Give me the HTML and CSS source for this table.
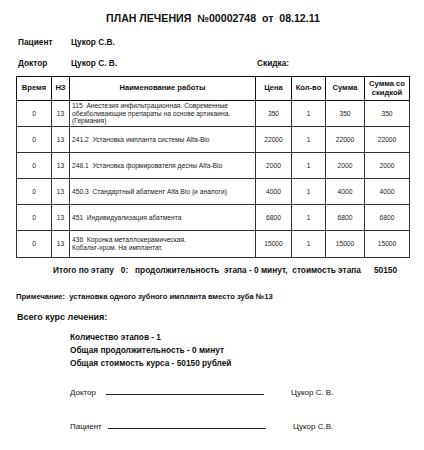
FILE: index.html
```html
<!DOCTYPE html>
<html lang="ru">
<head>
<meta charset="utf-8">
<link rel="stylesheet" href="styles.css">
</head>
<body>
<div class="page">
  <h1 class="title">ПЛАН ЛЕЧЕНИЯ&nbsp; №00002748&nbsp; от&nbsp; 08.12.11</h1>
  <div class="meta">
    <div class="meta-row"><span class="label">Пациент</span><span class="value">Цукор С.В.</span></div>
    <div class="meta-row"><span class="label">Доктор</span><span class="value">Цукор С. В.</span><span class="discount">Скидка:</span></div>
  </div>
  <table class="plan">
    <colgroup>
      <col class="c1"><col class="c2"><col class="c3"><col class="c4"><col class="c5"><col class="c6"><col class="c7">
    </colgroup>
    <thead>
      <tr><th>Время</th><th>НЗ</th><th>Наименование работы</th><th>Цена</th><th>Кол-во</th><th>Сумма</th><th>Сумма со скидкой</th></tr>
    </thead>
    <tbody>
      <tr><td>0</td><td>13</td><td class="name">115&nbsp; Анестезия инфильтрационная. Современные обезболивающие препараты на основе артикаина. (Германия)</td><td>350</td><td>1</td><td>350</td><td>350</td></tr>
      <tr><td>0</td><td>13</td><td class="name">241.2&nbsp; Установка импланта системы Alfa-Bio</td><td>22000</td><td>1</td><td>22000</td><td>22000</td></tr>
      <tr><td>0</td><td>13</td><td class="name">248.1&nbsp; Установка формирователя десны Alfa-Bio</td><td>2000</td><td>1</td><td>2000</td><td>2000</td></tr>
      <tr><td>0</td><td>13</td><td class="name">450.3&nbsp; Стандартный абатмент Alfa Bio (и аналоги)</td><td>4000</td><td>1</td><td>4000</td><td>4000</td></tr>
      <tr><td>0</td><td>13</td><td class="name">451&nbsp; Индивидуализация абатмента</td><td>6800</td><td>1</td><td>6800</td><td>6800</td></tr>
      <tr class="last"><td>0</td><td>13</td><td class="name">436&nbsp; Коронка металлокерамическая.<br>Кобальт-хром. На имплантат.</td><td>15000</td><td>1</td><td>15000</td><td>15000</td></tr>
    </tbody>
  </table>
  <div class="total"><span>Итого по этапу&nbsp;&nbsp; 0:&nbsp;&nbsp; продолжительность&nbsp; этапа - 0 минут,&nbsp; стоимость этапа</span><span>50150</span></div>
  <div class="note">Примечание:&nbsp; установка одного зубного импланта вместо зуба №13</div>
  <div class="course">Всего курс лечения:</div>
  <div class="summary">
    <div>Количество этапов - 1</div>
    <div>Общая продолжительность - 0 минут</div>
    <div>Общая стоимость курса - 50150 рублей</div>
  </div>
  <div class="sign">
    <div class="sign-row"><span class="sign-label">Доктор</span><span class="sign-line"></span><span class="sign-name">Цукор С. В.</span></div>
    <div class="sign-row"><span class="sign-label">Пациент</span><span class="sign-line"></span><span class="sign-name">Цукор С.В.</span></div>
  </div>
</div>
</body>
</html>
```
FILE: styles.css
```css
* { box-sizing: border-box; }
html, body { margin: 0; padding: 0; background: #fff; }
body { font-family: "Liberation Sans", Arial, sans-serif; color: #111; width: 424px; height: 450px; overflow: hidden; }
.page { padding: 0; }
.title { margin: 0; padding-top: 11px; font-size: 10.6px; line-height: 14px; font-weight: bold; text-align: center; padding-left: 2px; }
.meta { margin-top: 6px; padding-left: 18px; font-size: 8.3px; font-weight: bold; }
.meta-row { display: flex; align-items: center; height: 21px; }
.label { width: 53px; }
.value { width: 186px; }
.plan { margin-top: 3px; margin-left: 16px; width: 393px; border-collapse: collapse; table-layout: fixed; border: 1.6px solid #111; }
.c1 { width: 35px; } .c2 { width: 18px; } .c3 { width: 186px; } .c4 { width: 36px; } .c5 { width: 34px; } .c6 { width: 39px; } .c7 { width: 45px; }
.plan th { font-size: 7.6px; font-weight: bold; height: 24px; border: 1.4px solid #111; border-bottom-width: 1.8px; line-height: 8.5px; padding: 0 1px; text-align: center; }
.plan td { font-size: 6.7px; height: 26px; border: 1px solid #333; text-align: center; line-height: 7.6px; padding: 0 1px; color: #222; }
.plan tr.last td { height: 27px; }
.plan td.name { text-align: left; padding-left: 2px; }
.total { display: flex; justify-content: space-between; margin: 6px 27px 0 53px; font-size: 8.3px; font-weight: bold; height: 12px; line-height: 12px; }
.note { margin-top: 16px; padding-left: 16px; font-size: 7.6px; font-weight: bold; line-height: 10px; }
.course { margin-top: 9px; padding-left: 17px; font-size: 9px; font-weight: bold; line-height: 12px; }
.summary { margin-top: 8px; padding-left: 70px; font-size: 8.3px; font-weight: bold; }
.summary div { height: 13px; line-height: 13px; }
.sign { margin-top: 10px; padding-left: 70px; font-size: 8px; }
.sign-row { display: flex; align-items: flex-end; height: 17px; margin-bottom: 17px; }
.sign-label { width: 36px; }
.sign-line { width: 158px; border-bottom: 1.2px solid #222; margin-bottom: 2px; }
.sign-name { margin-left: 27px; }
.sign-row + .sign-row .sign-label { width: 38px; }
```
